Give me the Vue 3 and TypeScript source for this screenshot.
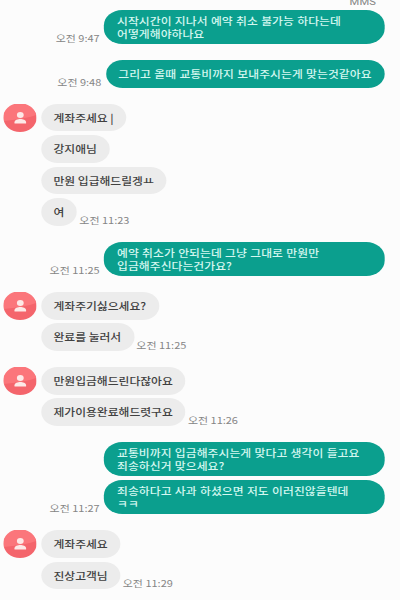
<script setup lang="ts">
interface Group {
  side: 'sent' | 'received'
  messages: string[][]
  time: string
}

const groups: Group[] = [
  { side: 'sent', messages: [['시작시간이 지나서 예약 취소 불가능 하다는데', '어떻게해야하나요']], time: '오전 9:47' },
  { side: 'sent', messages: [['그리고 올때 교통비까지 보내주시는게 맞는것같아요']], time: '오전 9:48' },
  { side: 'received', messages: [['계좌주세요 |'], ['강지애님'], ['만원 입급해드릴겡ㅛ'], ['여']], time: '오전 11:23' },
  { side: 'sent', messages: [['예약 취소가 안되는데 그냥 그대로 만원만', '입금해주신다는건가요?']], time: '오전 11:25' },
  { side: 'received', messages: [['계좌주기싫으세요?'], ['완료를 눌러서']], time: '오전 11:25' },
  { side: 'received', messages: [['만원입금해드린다잖아요'], ['제가이용완료해드렷구요']], time: '오전 11:26' },
  { side: 'sent', messages: [['교통비까지 입금해주시는게 맞다고 생각이 들고요', '죄송하신거 맞으세요?'], ['죄송하다고 사과 하셨으면 저도 이러진않을텐데', 'ㅋㅋ']], time: '오전 11:27' },
  { side: 'received', messages: [['계좌주세요'], ['진상고객님']], time: '오전 11:29' },
]
</script>

<template>
  <div class="viewport">
    <main class="chat">
      <div class="kind">MMS</div>
      <section v-for="(g, i) in groups" :key="i" class="group" :class="g.side">
        <svg v-if="g.side === 'received'" class="avatar" viewBox="0 0 28 28" aria-hidden="true">
          <circle cx="14" cy="14" r="14" fill="#f4656c" />
          <path d="M0.3 17 A14 14 0 1 1 27.6 11 Q20 14.5 0.3 17Z" fill="#fb767b" />
          <circle cx="14.2" cy="11" r="2.9" fill="#fde9e7" />
          <path d="M9.3 19.5V18.2C9.3 16 12 15 14.2 15S19.1 16 19.1 18.2V19.5Z" fill="#fde9e7" />
        </svg>
        <div class="stack">
          <div v-for="(m, j) in g.messages" :key="j" class="row">
            <div class="bubble" :class="{ wide: m.length > 1 }">
              <div v-for="line in m" :key="line">{{ line }}</div>
            </div>
            <time v-if="j === g.messages.length - 1">{{ g.time }}</time>
          </div>
        </div>
      </section>
    </main>
  </div>
</template>

<style>
body {
  background: #fcfcfc;
}
</style>

<style scoped>
.viewport {
  width: 400px;
  height: 600px;
  overflow: hidden;
  background: #fcfcfc;
}
.chat {
  box-sizing: border-box;
  width: 339px;
  height: 600px;
  padding: 0 13.2px 0 2.7px;
  display: flex;
  flex-direction: column;
  gap: 15.8px;
  transform: scaleX(1.18);
  transform-origin: 0 0;
  font-family: "Noto Sans CJK KR", sans-serif;
  font-size: 10px;
  line-height: 12.6px;
  white-space: nowrap;
}
.kind {
  height: 10px;
  margin-bottom: -15.8px;
  padding-right: 7.3px;
  text-align: right;
  font-family: Roboto, sans-serif;
  font-size: 9.5px;
  line-height: 3px;
  color: #858585;
}
.group {
  display: flex;
  align-items: flex-start;
}
.sent {
  justify-content: flex-end;
}
.avatar {
  width: 28px;
  height: 28px;
  margin-right: 3.9px;
  flex: none;
}
.stack {
  display: flex;
  flex-direction: column;
  gap: 3.7px;
}
.row {
  display: flex;
  align-items: flex-end;
  gap: 1.9px;
}
.sent .row {
  flex-direction: row-reverse;
  justify-content: flex-start;
  gap: 3.7px;
}
.bubble {
  box-sizing: border-box;
  height: 27.8px;
  padding: 8px 10.9px 7px 10.7px;
  border-radius: 14px;
  background: #ececec;
  color: #404040;
  font-weight: 500;
}
.sent .bubble {
  background: #0b9f8e;
  color: #d4f7f0;
  word-spacing: 0.5px;
  letter-spacing: 0.05px;
}
.bubble.wide {
  width: 237.7px;
  height: 34.3px;
  padding-top: 3.9px;
  padding-left: 11px;
  border-radius: 15.5px;
  line-height: 13px;
}
time {
  font-size: 9.3px;
  line-height: 12px;
  color: #858585;
}
</style>
